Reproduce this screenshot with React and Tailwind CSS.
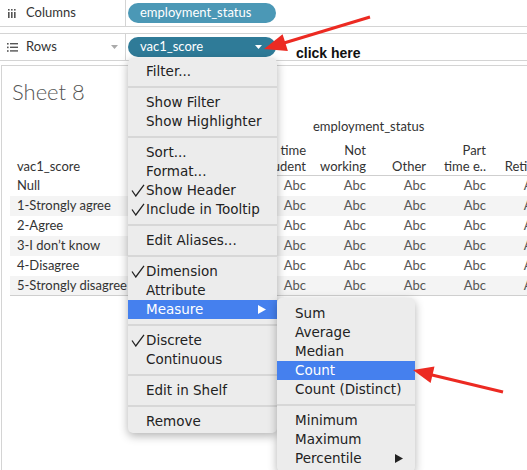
import React from "react";

const rows = ["Null", "1-Strongly agree", "2-Agree", "3-I don’t know", "4-Disagree", "5-Strongly disagree"];
const headers = [["Full time", "student"], ["Not", "working"], ["Other"], ["Part", "time e.."], ["Retired"]];

function Check() {
  return (
    <svg width="14" height="13" viewBox="0 0 14 13" className="ml-[3px]">
      <path d="M1 6.5 L4.8 12 L13 0.8" fill="none" stroke="#222" strokeWidth="1.3" />
    </svg>
  );
}

function SubArrow({ white }) {
  return (
    <svg width="8" height="9" viewBox="0 0 8 9">
      <polygon points="0,0 8,4.5 0,9" fill={white ? "#fff" : "#222"} />
    </svg>
  );
}

function Item({ label, check, active, sub, pr }) {
  return (
    <div className={active ? "flex items-center h-[19px] bg-[#4580ee] text-white" : "flex items-center h-[19px] text-[#222]"}>
      <span className="w-[18px] flex items-center">{check && <Check />}</span>
      <span className="flex-1 leading-[19px]">{label}</span>
      {sub && (
        <span className={pr ? "pr-[12px] flex items-center" : "pr-[11px] flex items-center"}>
          <SubArrow white={active} />
        </span>
      )}
    </div>
  );
}

function Sep() {
  return (
    <div className="h-[12px] flex items-center">
      <div className="h-[2px] w-full bg-[#d7d7d7]" />
    </div>
  );
}

export default function App() {
  return (
    <div className="relative w-[527px] h-[470px] overflow-hidden bg-white font-[Lato,sans-serif] text-[#333]">
      {/* Columns shelf */}
      <div className="flex h-[27px] border-b border-[#d4d4d4]">
        <div className="w-[126px] border-r border-[#d4d4d4] flex items-center pl-[8px] text-[13px]">
          <svg width="8" height="9" viewBox="0 0 8 9">
            <rect x="0" y="0" width="1.6" height="1.6" fill="#555" />
            <rect x="3" y="0" width="1.6" height="1.6" fill="#555" />
            <rect x="6" y="0" width="1.6" height="1.6" fill="#555" />
            <rect x="0" y="3" width="1.6" height="6" fill="#555" />
            <rect x="3" y="3" width="1.6" height="6" fill="#555" />
            <rect x="6" y="3" width="1.6" height="6" fill="#555" />
          </svg>
          <span className="ml-[10px]">Columns</span>
        </div>
        <div className="flex items-center pl-[2px]">
          <div className="w-[148px] h-[20px] rounded-full bg-[#4b98b6] text-white text-[13px] pl-[12px] flex items-center">
            employment_status
          </div>
        </div>
      </div>
      <div className="h-[6px]" />
      {/* Rows shelf */}
      <div className="flex h-[28px] border-y border-[#d4d4d4]">
        <div className="w-[126px] border-r border-[#d4d4d4] flex items-center pl-[7px] text-[13px]">
          <svg width="11" height="9" viewBox="0 0 11 9">
            <rect x="0" y="0" width="1.6" height="1.6" fill="#555" />
            <rect x="0" y="3.6" width="1.6" height="1.6" fill="#555" />
            <rect x="0" y="7.2" width="1.6" height="1.6" fill="#555" />
            <rect x="3" y="0" width="8" height="1.4" fill="#555" />
            <rect x="3" y="3.6" width="8" height="1.4" fill="#555" />
            <rect x="3" y="7.2" width="8" height="1.4" fill="#555" />
          </svg>
          <span className="ml-[8px]">Rows</span>
          <svg width="7" height="4" viewBox="0 0 7 4" className="ml-auto mr-[7px]">
            <polygon points="0,0 7,0 3.5,4" fill="#aaa" />
          </svg>
        </div>
        <div className="flex items-center pl-[2px]">
          <div className="w-[148px] h-[20px] rounded-full bg-[#2f7b98] text-white text-[13px] pl-[12px] pr-[14px] flex items-center">
            <span className="flex-1">vac1_score</span>
            <svg width="7" height="4" viewBox="0 0 7 4">
              <polygon points="0,0 7,0 3.5,4" fill="#fff" />
            </svg>
          </div>
        </div>
      </div>
      <div className="h-[4px]" />

      {/* Sheet */}
      <div className="ml-[1px] h-[406px] border-t border-l border-[#d4d4d4]">
        <div className="pl-[10px] pt-[13px] text-[22px] leading-[26px] font-light text-[#555]">Sheet 8</div>
        <div className="mt-[13px] pl-[311px] text-[13px] leading-[16px]">employment_status</div>
        <div className="pl-[8px]">
          <div className="grid grid-cols-[240px_60px_60px_60px_60px_60px] w-[540px] h-[42px] text-[13px] leading-[16px]">
            <div className="flex items-end pl-[7px] pb-[2px]">vac1_score</div>
            {headers.map((h, i) => (
              <div key={i} className="flex flex-col justify-end items-end pr-[4px] pb-[1px] border-b border-[#cfcfcf] whitespace-nowrap">
                {h.map((l, j) => (
                  <span key={j}>{l}</span>
                ))}
              </div>
            ))}
          </div>
          {rows.map((r, i) => (
            <div
              key={r}
              className={
                i % 2 === 1
                  ? i === 5
                    ? "grid grid-cols-[240px_60px_60px_60px_60px_60px] w-[540px] h-[20px] leading-[19px] text-[13px] bg-[#f4f4f4] border-b border-[#cfcfcf]"
                    : "grid grid-cols-[240px_60px_60px_60px_60px_60px] w-[540px] h-[20px] leading-[19px] text-[13px] bg-[#f4f4f4]"
                  : "grid grid-cols-[240px_60px_60px_60px_60px_60px] w-[540px] h-[20px] leading-[19px] text-[13px]"
              }
            >
              <div className="pl-[7px] whitespace-nowrap">{r}</div>
              {[0, 1, 2, 3, 4].map((c) => (
                <div key={c} className="text-right pr-[4px] text-[#555]">Abc</div>
              ))}
            </div>
          ))}
        </div>
      </div>

      {/* Context menu */}
      <div className="absolute left-[128px] top-[58px] w-[149px] pt-[4px] pb-[2px] rounded-[5px] bg-[#ececec] shadow-[0_3px_10px_rgba(0,0,0,0.3)] font-['DejaVu_Sans',sans-serif] text-[13.5px]">
        <Item label="Filter..." />
        <Sep />
        <Item label="Show Filter" />
        <Item label="Show Highlighter" />
        <Sep />
        <Item label="Sort..." />
        <Item label="Format..." />
        <Item label="Show Header" check />
        <Item label="Include in Tooltip" check />
        <Sep />
        <Item label="Edit Aliases..." />
        <Sep />
        <Item label="Dimension" check />
        <Item label="Attribute" />
        <Item label="Measure" active sub />
        <Sep />
        <Item label="Discrete" check />
        <Item label="Continuous" />
        <Sep />
        <Item label="Edit in Shelf" />
        <Sep />
        <Item label="Remove" />
      </div>

      {/* Submenu */}
      <div className="absolute left-[277px] top-[298px] w-[138px] pt-[6px] pb-[4px] rounded-[5px] bg-[#ececec] shadow-[0_3px_10px_rgba(0,0,0,0.3)] font-['DejaVu_Sans',sans-serif] text-[13.5px]">
        <Item label="Sum" />
        <Item label="Average" />
        <Item label="Median" />
        <Item label="Count" active />
        <Item label="Count (Distinct)" />
        <Sep />
        <Item label="Minimum" />
        <Item label="Maximum" />
        <Item label="Percentile" sub pr />
      </div>

      {/* Annotations */}
      <div className="absolute left-[296px] top-[45px] font-['Liberation_Sans',Arial,sans-serif] font-bold text-[14px] leading-[16px] text-[#111]">
        click here
      </div>
      <svg className="absolute left-0 top-0 pointer-events-none" width="527" height="470" viewBox="0 0 527 470">
        <line x1="370" y1="17" x2="284" y2="43" stroke="#ec2a22" strokeWidth="3" />
        <polygon points="264,49 287.9,51 282.6,34.2" fill="#ec2a22" />
        <line x1="503" y1="392" x2="430" y2="374.5" stroke="#ec2a22" strokeWidth="3" />
        <polygon points="413,370 434.5,366.5 430.6,383" fill="#ec2a22" />
      </svg>
    </div>
  );
}
